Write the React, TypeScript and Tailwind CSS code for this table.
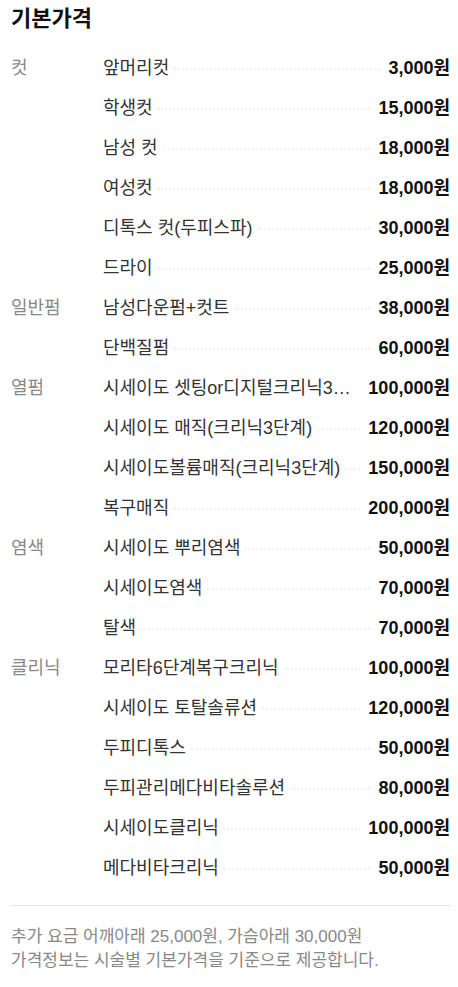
import React from "react";

type Row = { cat?: string; name: string; price: string };

const rows: Row[] = [
  { cat: "컷", name: "앞머리컷", price: "3,000" },
  { name: "학생컷", price: "15,000" },
  { name: "남성 컷", price: "18,000" },
  { name: "여성컷", price: "18,000" },
  { name: "디톡스 컷(두피스파)", price: "30,000" },
  { name: "드라이", price: "25,000" },
  { cat: "일반펌", name: "남성다운펌+컷트", price: "38,000" },
  { name: "단백질펌", price: "60,000" },
  { cat: "열펌", name: "시세이도 셋팅or디지털크리닉3단계", price: "100,000" },
  { name: "시세이도 매직(크리닉3단계)", price: "120,000" },
  { name: "시세이도볼륨매직(크리닉3단계)", price: "150,000" },
  { name: "복구매직", price: "200,000" },
  { cat: "염색", name: "시세이도 뿌리염색", price: "50,000" },
  { name: "시세이도염색", price: "70,000" },
  { name: "탈색", price: "70,000" },
  { cat: "클리닉", name: "모리타6단계복구크리닉", price: "100,000" },
  { name: "시세이도 토탈솔류션", price: "120,000" },
  { name: "두피디톡스", price: "50,000" },
  { name: "두피관리메다비타솔루션", price: "80,000" },
  { name: "시세이도클리닉", price: "100,000" },
  { name: "메다비타크리닉", price: "50,000" },
];

export default function App() {
  return (
    <div
      className="w-[458px] bg-white pl-[11px] pr-[8px] pt-[5px] pb-4"
      style={{ fontFamily: '"Liberation Sans", "Noto Sans CJK KR", sans-serif' }}
    >
      <h1 className="text-[22px] leading-[28px] font-bold text-[#111]">기본가격</h1>
      <div className="mt-[15px]">
        {rows.map((r, i) => (
          <div key={i} className="flex h-10 items-start pt-[8px]">
            <div className="w-[92px] shrink-0 text-[18px] leading-[24px] text-[#888]">{r.cat ?? ""}</div>
            <div className="flex min-w-0 flex-1 items-center">
              <span className="min-w-0 truncate text-[18px] leading-[24px] text-[#333]">{r.name}</span>
              <span className="ml-[5px] mr-[8px] mt-[1px] min-w-0 flex-1 border-t-2 border-dotted border-[#efefef]" />
              <span className="shrink-0 text-[18px] leading-[24px] font-bold text-[#111]">{r.price}원</span>
            </div>
          </div>
        ))}
      </div>
      <div className="mr-[-1px] ml-[-1px] mt-[17px] border-t border-[#e5e5e5] pl-[1px] pt-[19px] text-[17px] leading-[24px] text-[#888]">
        <p>추가 요금 어깨아래 25,000원, 가슴아래 30,000원</p>
        <p>가격정보는 시술별 기본가격을 기준으로 제공합니다.</p>
      </div>
    </div>
  );
}
